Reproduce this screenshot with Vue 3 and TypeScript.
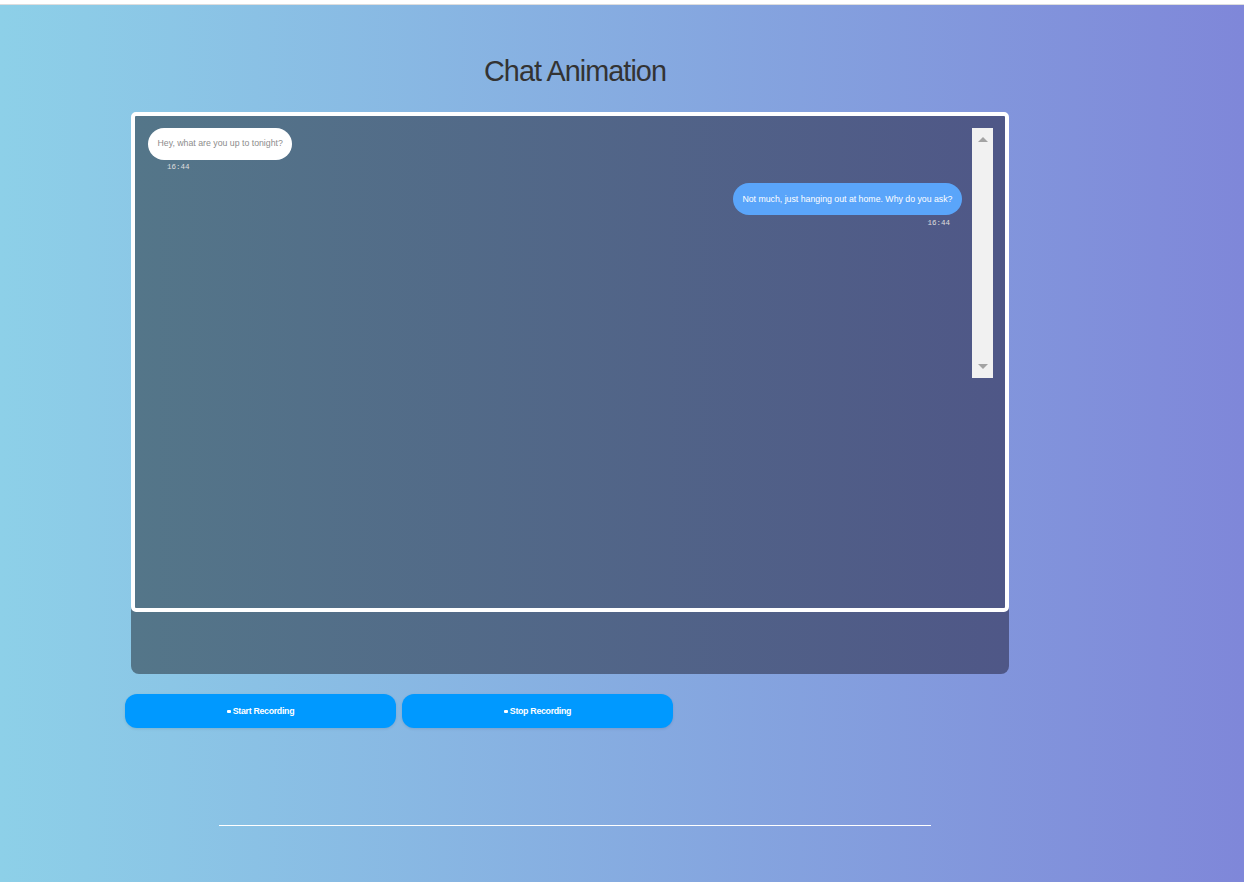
<script setup lang="ts">
interface Message {
  id: number
  side: 'left' | 'right'
  text: string
  time: string
}

const messages: Message[] = [
  { id: 1, side: 'left', text: 'Hey, what are you up to tonight?', time: '16:44' },
  { id: 2, side: 'right', text: 'Not much, just hanging out at home. Why do you ask?', time: '16:44' },
]

const actions = ['Start Recording', 'Stop Recording']
</script>

<template>
  <div class="page">
    <div class="container">
      <h1 class="title">Chat Animation</h1>
      <div class="card">
        <div class="chat">
          <div class="messages">
            <div v-for="m in messages" :key="m.id" class="message" :class="m.side">
              <div class="bubble">{{ m.text }}</div>
              <div class="time">{{ m.time }}</div>
            </div>
          </div>
          <div class="scrollbar">
            <span class="arrow up"></span>
            <span class="arrow down"></span>
          </div>
        </div>
      </div>
      <div class="buttons">
        <button v-for="a in actions" :key="a" class="btn">
          <span class="dot"></span>{{ a }}
        </button>
      </div>
      <hr class="rule" />
    </div>
  </div>
</template>

<style>
html, body {
  margin: 0;
}
</style>

<style scoped>
.page {
  box-sizing: border-box;
  height: 882px;
  overflow: hidden;
  padding-top: 4px;
  background: #fff;
  font-family: "Liberation Sans", Arial, sans-serif;
}
.page::before {
  content: "";
  display: block;
  height: 1px;
  background: #dddddd;
}
.container {
  background: linear-gradient(90deg, #8dd0e8, #7f87d9);
  height: 877px;
  padding-left: 125px;
  box-sizing: border-box;
  display: flex;
  flex-direction: column;
  align-items: flex-start;
}
.title {
  width: 900px;
  margin: 49px 0 24px;
  font-size: 28.8px;
  font-weight: 400;
  line-height: 34px;
  letter-spacing: -0.95px;
  text-align: center;
  color: #333333;
}
.card {
  margin-left: 6px;
  width: 878px;
  height: 562px;
  border-radius: 8px;
  background: linear-gradient(90deg, #547689, #4f5787);
}
.chat {
  box-sizing: border-box;
  height: 500px;
  border: 4px solid #ffffff;
  border-radius: 5px;
  padding: 12px 12px 0 13px;
  display: flex;
  align-items: flex-start;
  gap: 10px;
}
.messages {
  flex: 1;
  display: flex;
  flex-direction: column;
}
.message {
  display: flex;
  flex-direction: column;
  margin-bottom: 10px;
}
.message.left {
  align-items: flex-start;
}
.message.right {
  align-items: flex-end;
}
.bubble {
  height: 32px;
  line-height: 30px;
  padding: 0 9.5px;
  border-radius: 16px;
  font-size: 8.75px;
}
.left .bubble {
  background: #ffffff;
  color: #8c8c8c;
}
.right .bubble {
  background: #5aa5fa;
  color: #ffffff;
  line-height: 32px;
}
.time {
  font-family: "Liberation Mono", monospace;
  font-size: 7.5px;
  line-height: 11px;
  color: #dddddd;
}
.left .time {
  margin: 2px 0 0 19px;
}
.right .time {
  margin: 3px 12px 0 0;
}
.scrollbar {
  width: 21px;
  height: 250px;
  background: #f1f1f1;
  display: flex;
  flex-direction: column;
  justify-content: space-between;
  align-items: center;
  padding: 9px 0;
  box-sizing: border-box;
}
.arrow {
  width: 0;
  height: 0;
  border-left: 5px solid transparent;
  border-right: 5px solid transparent;
}
.arrow.up {
  border-bottom: 5px solid #a3a3a3;
}
.arrow.down {
  border-top: 5px solid #a3a3a3;
}
.buttons {
  display: flex;
  gap: 6px;
  margin-top: 20px;
}
.btn {
  width: 271px;
  height: 34px;
  border: none;
  border-radius: 12px;
  background: #0099ff;
  color: #ffffff;
  font-family: inherit;
  font-size: 8.8px;
  font-weight: 700;
  letter-spacing: -0.3px;
  box-shadow: 0 1px 3px rgba(0, 0, 0, 0.1);
  padding: 0;
  display: flex;
  align-items: center;
  justify-content: center;
  gap: 2px;
}
.dot {
  width: 4px;
  height: 3px;
  background: #ffffff;
  border-radius: 1px;
}
.rule {
  width: 712px;
  height: 1px;
  border: none;
  background: #ffffff;
  margin: 97px 0 0 94px;
}
</style>
